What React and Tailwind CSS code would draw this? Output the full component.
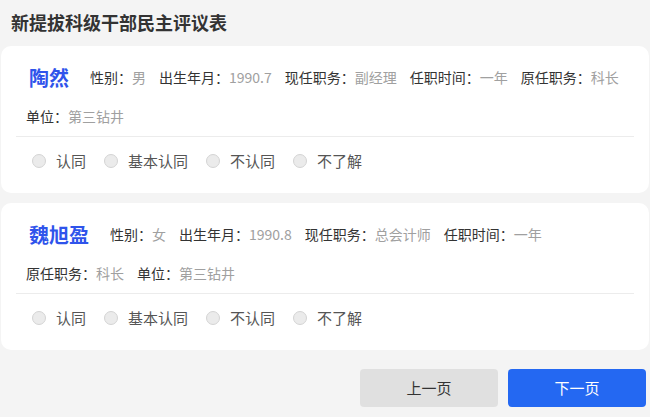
import React from "react";

const people = [
  {
    name: "陶然",
    info: [
      ["性别", "男"],
      ["出生年月", "1990.7"],
      ["现任职务", "副经理"],
      ["任职时间", "一年"],
      ["原任职务", "科长"],
      ["单位", "第三钻井"],
    ],
  },
  {
    name: "魏旭盈",
    info: [
      ["性别", "女"],
      ["出生年月", "1990.8"],
      ["现任职务", "总会计师"],
      ["任职时间", "一年"],
      ["原任职务", "科长"],
      ["单位", "第三钻井"],
    ],
  },
];

const options = ["认同", "基本认同", "不认同", "不了解"];

function Card({ p }) {
  return (
    <div className="mx-[1px] rounded-[10px] bg-white pb-[8px] pt-[12px]">
      <div className="flex flex-wrap items-center pl-[25px] pr-[10px]">
        <div className="ml-[3px] mr-[21px] flex h-[39px] items-center text-[20px] font-bold text-[#2f54eb]">
          {p.name}
        </div>
        {p.info.map(([k, v]) => (
          <div key={k} className="mr-[13px] flex h-[39px] items-center text-[14px]">
            <span className="text-[#333]">{k}：</span>
            <span className="text-[#a0a0a0]">{v}</span>
          </div>
        ))}
      </div>
      <div className="mx-[15px] h-px bg-[#ececec]" />
      <div className="flex h-[48px] items-center pl-[31px]">
        {options.map((o) => (
          <label key={o} className="mr-[18px] flex items-center">
            <span className="h-[14px] w-[14px] rounded-full border border-[#d4d4d4] bg-[#ebebeb]" />
            <span className="ml-[10px] text-[15px] text-[#555]">{o}</span>
          </label>
        ))}
      </div>
    </div>
  );
}

export default function App() {
  return (
    <div
      className="min-h-[417px] w-[650px] bg-[#f4f4f4]"
      style={{ fontFamily: '"Noto Sans CJK SC", "Noto Sans", sans-serif' }}
    >
      <div className="pl-[11px] pt-[10px] text-[18px] font-bold leading-[24px] text-[#333]">
        新提拔科级干部民主评议表
      </div>
      <div className="mt-[12px] flex flex-col gap-[10px]">
        {people.map((p) => (
          <Card key={p.name} p={p} />
        ))}
      </div>
      <div className="mt-[19px] flex justify-end gap-[10px] pr-[4px]">
        <button className="h-[38px] w-[138px] rounded-[4px] bg-[#e0e0e0] text-[15px] text-[#333]">
          上一页
        </button>
        <button className="h-[38px] w-[138px] rounded-[4px] bg-[#2468f2] text-[15px] text-white">
          下一页
        </button>
      </div>
    </div>
  );
}
